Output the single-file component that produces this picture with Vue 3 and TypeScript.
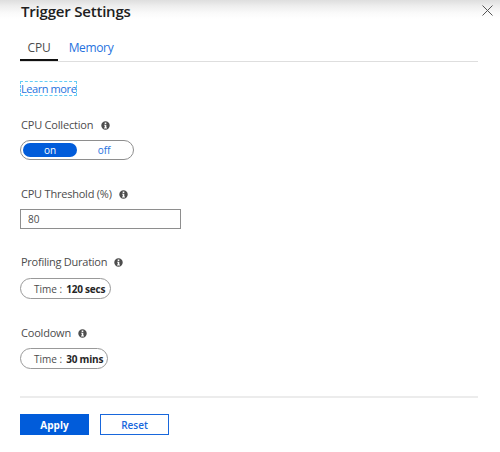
<script setup lang="ts">
import { ref } from 'vue'

const activeTab = ref<string>('CPU')
const tabs: string[] = ['CPU', 'Memory']
const collecting = ref<boolean>(true)
const threshold = ref<string>('80')
const iconPath =
  'M5 .3a4.7 4.7 0 1 0 0 9.4A4.7 4.7 0 0 0 5 .3ZM4.1 1.6h1.8v1.6H4.1ZM3.4 4.1h2.5v3.2h.7v.9H3.4v-.9h.8V5h-.8Z'
</script>

<template>
  <main class="panel">
    <header class="header">
      <h1 class="title">Trigger Settings</h1>
      <button class="close" aria-label="Close">
        <svg width="11" height="11" viewBox="0 0 11 11"><path d="M.5.5l10 10M10.5.5l-10 10" /></svg>
      </button>
    </header>

    <nav class="tabs">
      <button
        v-for="tab in tabs"
        :key="tab"
        class="tab"
        :class="{ active: tab === activeTab, memory: tab === 'Memory' }"
        @click="activeTab = tab"
      ><span>{{ tab }}</span></button>
    </nav>

    <a class="learn">Learn more</a>

    <section class="field collection">
      <div class="label"><span class="l-collection">CPU Collection</span><svg class="info" viewBox="0 0 10 10"><path fill-rule="evenodd" :d="iconPath" /></svg></div>
      <div class="toggle">
        <button class="option" :class="{ selected: collecting }" @click="collecting = true">on</button>
        <button class="option" :class="{ selected: !collecting }" @click="collecting = false">off</button>
      </div>
    </section>

    <section class="field threshold">
      <div class="label"><span class="l-threshold">CPU Threshold (%)</span><svg class="info" viewBox="0 0 10 10"><path fill-rule="evenodd" :d="iconPath" /></svg></div>
      <input v-model="threshold" class="input" />
    </section>

    <section class="field duration">
      <div class="label"><span class="l-duration">Profiling Duration</span><svg class="info" viewBox="0 0 10 10"><path fill-rule="evenodd" :d="iconPath" /></svg></div>
      <div class="pill wide"><span class="key">Time :</span><b>120 secs</b></div>
    </section>

    <section class="field cooldown">
      <div class="label"><span class="l-cooldown">Cooldown</span><svg class="info" viewBox="0 0 10 10"><path fill-rule="evenodd" :d="iconPath" /></svg></div>
      <div class="pill"><span class="key">Time :</span><b>30 mins</b></div>
    </section>

    <footer class="footer">
      <button class="action primary">Apply</button>
      <button class="action">Reset</button>
    </footer>
  </main>
</template>

<style>
body { margin: 0; background: #fff; }
</style>

<style scoped>
.panel {
  box-sizing: border-box;
  width: 500px;
  height: 452px;
  padding: 0 22px 0 20px;
  overflow: hidden;
  display: flex;
  flex-direction: column;
  align-items: flex-start;
  font-family: "Open Sans", "Noto Sans", sans-serif;
  font-size: 11px;
  color: #4c4c4c;
  background: linear-gradient(#dedede 0, #eeeeee 6px, #fafafa 13px, #fff 19px);
}
button { font: inherit; border: 0; padding: 0; margin: 0; background: none; }
.header { display: flex; justify-content: space-between; width: 473px; height: 36px; }
.title { margin: 0; padding-left: 1px; font-size: 15px; line-height: 22px; font-weight: 600; letter-spacing: -.2px; color: #202020; }
.close { width: 11px; height: 11px; margin-top: 5px; display: flex; }
.close path { stroke: #555; stroke-width: 1; fill: none; }
.tabs { display: flex; box-sizing: border-box; width: 458px; height: 26px; border-bottom: 1px solid #dedede; }
.tab { box-sizing: border-box; width: 38px; height: 25px; border-bottom: 2px solid transparent; font-size: 12px; line-height: 24px; color: #2672de; white-space: nowrap; letter-spacing: -.2px; }
.tab.active { color: #4c4c4c; border-bottom-color: #111; }
.tab.memory { width: 66px; letter-spacing: -.35px; }
.learn { box-sizing: border-box; width: 57px; height: 15px; margin-top: 19px; border: 1px dashed #64cdf5; line-height: 14px; color: #2672de; white-space: nowrap; letter-spacing: -.42px; }
.field { display: flex; flex-direction: column; align-items: flex-start; }
.collection { margin-top: 21px; }
.threshold { margin-top: 26px; }
.duration { margin-top: 25px; }
.cooldown { margin-top: 26px; }
.label { display: flex; align-items: center; gap: 8px; height: 16px; line-height: 16px; white-space: nowrap; padding-left: 1px; }
.l-collection { width: 72px; letter-spacing: -.2px; }
.l-threshold { width: 90px; letter-spacing: -.22px; }
.l-duration { width: 85px; letter-spacing: -.25px; }
.l-cooldown { width: 49px; letter-spacing: -.2px; }
.info { width: 9px; height: 9px; fill: #4d4d4d; }
.toggle { box-sizing: border-box; display: flex; width: 114px; height: 20px; margin-top: 7px; border: 1px solid #8e8e8e; border-radius: 10px; padding: 2px; }
.option { width: 54px; height: 14px; border-radius: 7px; font-size: 10px; line-height: 15px; color: #2672de; }
.option.selected { background: #015cda; color: #fff; }
.input { box-sizing: border-box; width: 161px; height: 20px; margin: 7px 0 0; padding: 0 7px; border: 1px solid #8e8e8e; border-radius: 0; background: #fff; color: #4c4c4c; font: 10px/18px "Open Sans", sans-serif; outline: none; }
.pill { box-sizing: border-box; display: flex; gap: 4px; width: 88px; height: 21px; margin-top: 8px; padding-left: 13px; border: 1px solid #999; border-radius: 11px; font-size: 10px; line-height: 20px; white-space: nowrap; }
.cooldown .pill { margin-top: 7px; }
.pill.wide { width: 91px; }
.pill b { color: #262626; letter-spacing: -.2px; }
.footer { box-sizing: border-box; display: flex; gap: 11px; width: 458px; margin-top: 27px; padding-top: 16px; border-top: 2px solid #ececec; }
.action { box-sizing: border-box; width: 69px; height: 21px; border: 1px solid #1867dc; font-size: 10px; line-height: 18px; font-weight: 600; color: #1867dc; background: #fff; }
.action.primary { background: #015cda; border-color: #015cda; color: #fff; font-weight: 700; }
</style>
